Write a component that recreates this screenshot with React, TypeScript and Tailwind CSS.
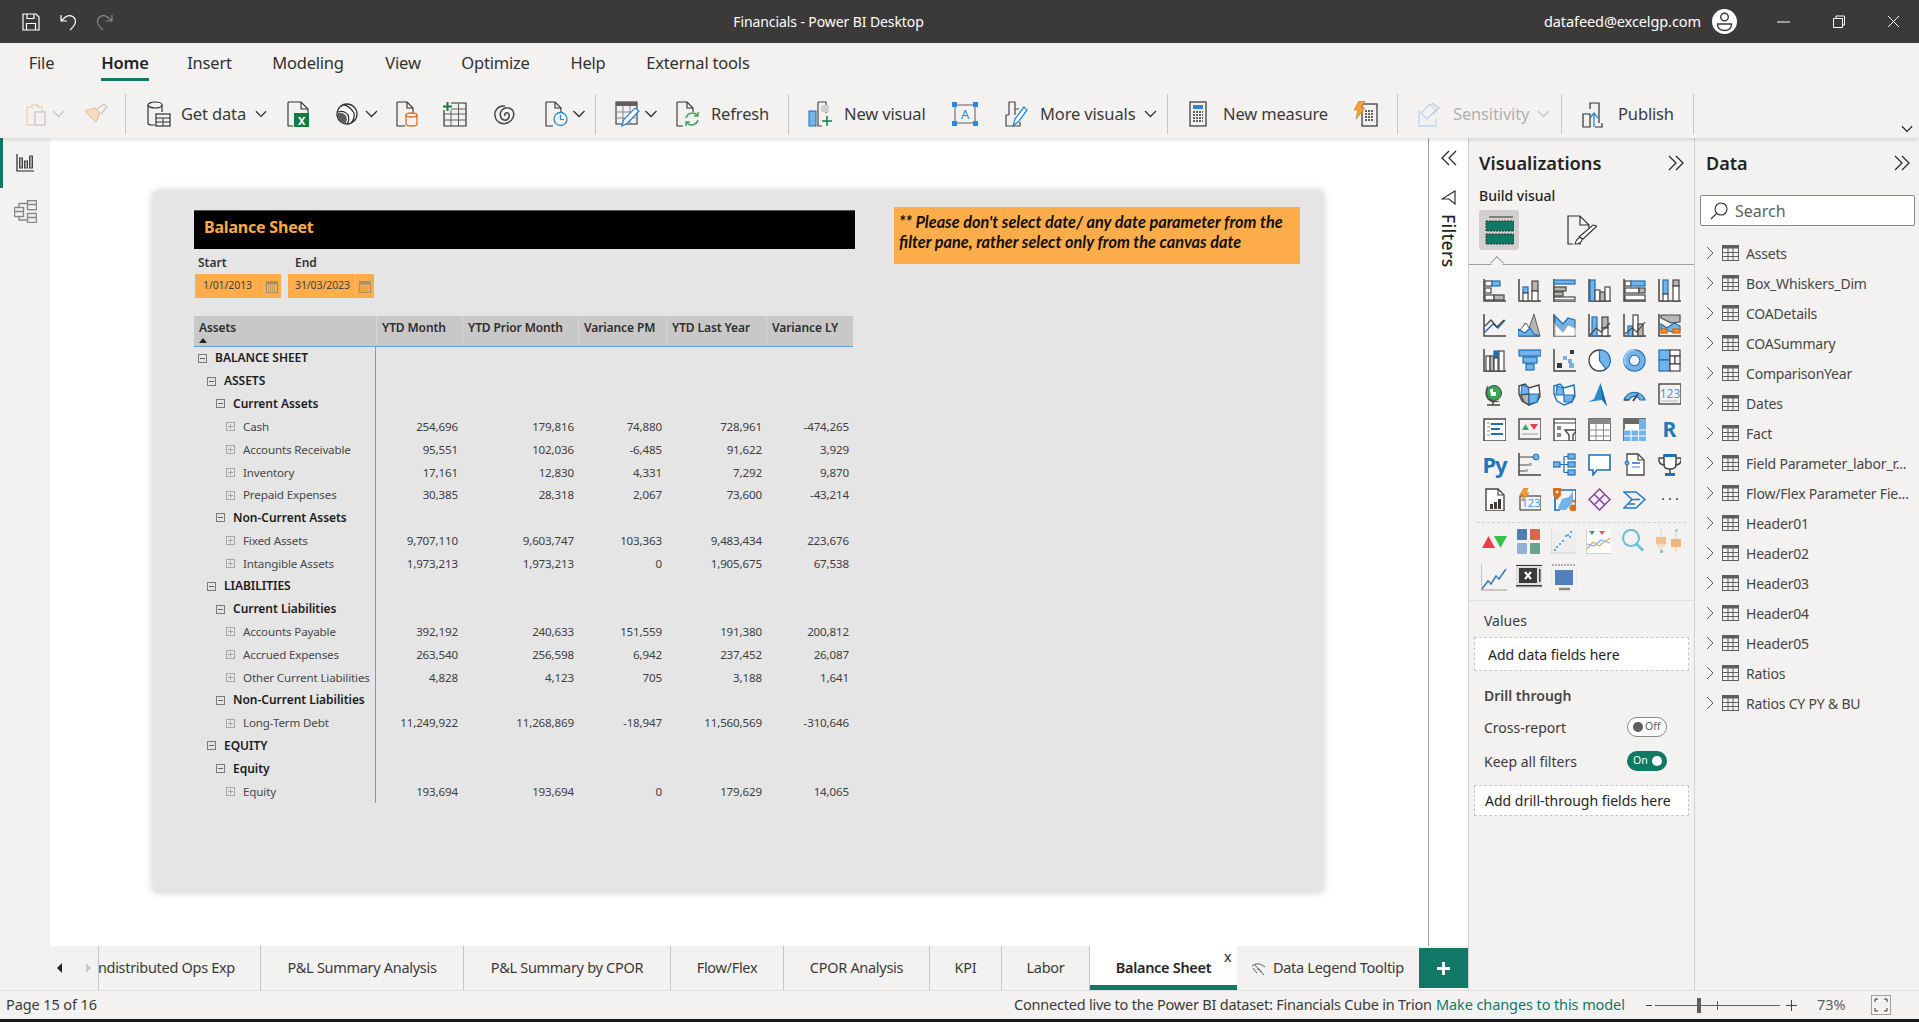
import React from "react";

const D = "#484644";
const B = "#1f6fb5";
const L = "#74b3ea";
const G = "#b8b6b4";
const W = "#ffffff";

const r = (x: number, y: number, w: number, h: number, f = W, s = D, sw = 1.2) => (
  <rect x={x} y={y} width={w} height={h} fill={f} stroke={s} strokeWidth={sw} />
);
const p = (d: string, f = "none", s = D, sw = 1.2) => <path d={d} fill={f} stroke={s} strokeWidth={sw} />;

function Ico({ children, size = 23, w, h, vb = "0 0 23 23" }: any) {
  return (
    <svg width={w ?? size} height={h ?? size} viewBox={vb} fill="none" className="shrink-0 block">
      {children}
    </svg>
  );
}

const Ax = p("M1 0v22h22", "none", D, 1.5);

const vizIcons: React.ReactNode[] = [
  <>{Ax}{r(2, 2, 7, 5)}{r(9, 2, 8, 5, L, B)}{r(2, 9, 6, 5)}{r(2, 16, 9, 5)}{r(11, 16, 10, 5, G, D)}</>,
  <>{Ax}{r(5, 8, 5, 6, L, B)}{r(5, 14, 5, 8)}{r(14, 2, 6, 10, G, D)}{r(14, 12, 6, 10)}</>,
  <>{p("M1 0v23h22", "none", D, 1.5)}{r(1, 1, 21, 4, L, B)}{r(1, 8, 12, 4, G, D)}{r(1, 13, 9, 4, G, D)}{r(1, 18, 21, 3)}</>,
  <>{Ax}{r(2, 1, 5, 21, L, B)}{r(7, 11, 5, 11)}{r(12, 13, 5, 9, G, D)}{r(17, 8, 5, 14)}</>,
  <>{Ax}{r(2, 2, 6, 5)}{r(8, 2, 14, 5, L, B)}{r(2, 9, 14, 5)}{r(16, 9, 6, 5, G, D)}{r(2, 16, 20, 5)}</>,
  <>{Ax}{r(5, 1, 5, 14, L, B)}{r(5, 15, 5, 7)}{r(15, 1, 6, 6, G, D)}{r(15, 7, 6, 15)}</>,
  <>{Ax}{p("M2 18L10 10L15 14L22 6", "none", B, 1.4)}{p("M2 12L8 6L14 13L21 6", "none", D, 1.2)}</>,
  <>{p("M0 22L7 9L11 14L16 0L22 22Z", G, D, 0.8)}{p("M1 22V17L8 9L15 20L22 22Z", W, D, 0.8)}{p("M0 22V15L7 19L12 14L16 20L22 22Z", L, B, 1.2)}</>,
  <>{Ax}{p("M2 2L10 10L15 4L22 6V14L15 11L10 18L2 10Z", L, B)}{p("M2 10L10 18L15 11L22 14V22H2Z", W, G)}</>,
  <>{Ax}{r(4, 3, 5, 19, L, B)}{r(14, 3, 6, 11, G, D)}{r(14, 14, 6, 8)}{p("M2 21L8 14L13 18L22 9", "none", D)}</>,
  <>{Ax}{r(5, 12, 5, 10, L, B)}{r(10, 1, 5, 21)}{r(15, 10, 5, 12, G, D)}{p("M2 20L9 14L14 18L22 8", "none", D)}</>,
  <>{Ax}{p("M3 1H22V8L13 9L3 4Z", G, D)}{p("M3 10L9 14L16 9L22 12V16L14 18L3 15Z", L, B)}{r(3, 15, 6, 4, "#e8912d", "#c86a10")}{r(15, 15, 7, 4, "#e8912d", "#c86a10")}</>,
  <>{Ax}{r(3, 7, 4, 15)}{r(7, 7, 4, 15, G, D)}{r(11, 2, 4, 7, B, B)}{r(11, 9, 4, 13)}{r(16, 2, 5, 20)}</>,
  <>{r(1, 1, 22, 6, L, B)}{r(5, 8, 14, 6, L, B)}{r(8, 15, 8, 6, L, B)}</>,
  <>{Ax}<rect x="17" y="1" width="4" height="4" fill="#3b3a39" /><rect x="10" y="7" width="4" height="4" fill={L} /><rect x="15" y="10" width="4" height="4" fill={L} /><rect x="4" y="14" width="5" height="5" fill="#3b3a39" /><rect x="16" y="14" width="5" height="5" fill={L} /></>,
  <><circle cx="11.5" cy="11.5" r="10.5" fill={W} stroke={D} strokeWidth="1.3" />{p("M11.5 1A10.5 10.5 0 0 1 18 20L11.5 11.5Z", L, B)}</>,
  <><circle cx="11.5" cy="11.5" r="8" stroke={B} strokeWidth="6.5" /><circle cx="11.5" cy="11.5" r="8" stroke={L} strokeWidth="4.5" /><path d="M11.5 1A10 10 0 0 0 3 16" stroke="#9cc9f0" strokeWidth="2" /></>,
  <>{r(1, 1, 11, 10, L, B)}{r(1, 11, 11, 11, L, B)}{r(12, 1, 10, 6)}{r(12, 7, 5, 8, W, D)}{r(17, 7, 5, 8)}{r(12, 15, 10, 7, W, D)}</>,
  <><circle cx="11" cy="10" r="7.5" fill="#3aa655" stroke={D} /><path d="M7 6h3v3h3v4H8z" fill={W} /><path d="M5 3Q1 10 5 16Q9 20 16 18" stroke={D} strokeWidth="1.3" /><path d="M4 22h13M10 18v4" stroke={D} strokeWidth="1.5" /></>,
  <>{p("M1 3L7 1L11 5L21 2L22 13L19 19L11 22L4 18L1 11Z", W, D, 1.4)}{p("M4 2L10 4L11 11L3 12Z", L, B)}{p("M11 11L3 12L6 19L11 22Z", G, D)}{p("M11 11H21L19 19L11 21Z", L, B)}</>,
  <>{p("M1 3L7 1L11 5L21 2L22 13L19 19L11 22L4 18L1 11Z", W, B, 1.4)}{p("M4 3L10 5L11 12L3 12Z", L, B)}{p("M11 12H21L19 19L11 19Z", L, B)}</>,
  <><path d="M12.5 0L6 16L0 19L14 17L19 23Z" fill="#2a8fc9" /><path d="M12.5 0L14 17L19 23Z" fill="#1b6ea8" /></>,
  <>{p("M1 17A11 11 0 0 1 22 17H17A6 6 0 0 0 6 17Z", L, B)}{p("M1 17H6", "none", D)}<path d="M10 18L15 11" stroke={D} strokeWidth="2" /></>,
  <>{r(1, 1, 22, 20, "#f3f2f1", D, 1.4)}<text x="12" y="15" textAnchor="middle" fontSize="12" fill="#4a9be0" fontFamily="Noto Sans">123</text><path d="M3 18h17" stroke={G} /></>,
  <>{r(1, 1, 22, 22, W, D, 1.5)}<path d="M4 5h3M4 9h3M4 13h3M4 17h3" stroke={G} strokeWidth="1.5" /><path d="M8 6h12M8 11h9M8 16h12" stroke={B} strokeWidth="2" /></>,
  <>{r(1, 1, 22, 20, "#f3f2f1", D, 1.4)}<path d="M4 12L7.5 6L11 12Z" fill="#43a35f" /><path d="M12 6H20L16 12Z" fill="#e2424c" /><path d="M4 16h16" stroke={G} strokeWidth="1.5" /></>,
  <>{r(1, 1, 22, 22, W, D, 1.4)}<path d="M1 5h22" stroke={D} /><rect x="4" y="8" width="4" height="4" fill="#8a8886" /><rect x="4" y="15" width="4" height="4" fill="#8a8886" />{p("M12 12H24L20 17V23H16V17Z", W, D, 1.4)}</>,
  <>{r(1, 1, 22, 22, W, D, 1.5)}<rect x="1" y="1" width="22" height="5" fill="#8a8886" /><path d="M1 12h22M1 18h22M8 6v17M15.5 6v17" stroke="#8a8886" /></>,
  <>{r(1, 1, 22, 22, W, D, 1.5)}<rect x="1" y="1" width="22" height="5" fill="#6b6967" /><rect x="16" y="1" width="7" height="22" fill={L} /><rect x="1" y="12" width="15" height="11" fill={L} /><path d="M1 12h22M1 18h22M8 6v17M15.5 6v17" stroke={W} /></>,
  <div className="flex h-[23px] w-[23px] items-center justify-center text-[21px] font-bold leading-none text-[#1f78b8]">R</div>,
  <div className="flex h-[23px] w-[23px] items-center justify-center text-[22px] font-bold leading-none tracking-[-1px] text-[#1f78b8]">Py</div>,
  <>{Ax}<path d="M1 4h15M1 12h11M1 18h6" stroke={D} /><circle cx="18" cy="4" r="3" fill={L} stroke={B} /><rect x="11" y="10" width="3" height="3" fill={G} /><rect x="7" y="16" width="3" height="3" fill={G} /></>,
  <>{r(0, 9, 7, 5, L, B)}{r(15, 1, 7, 5, L, B)}{r(15, 9, 7, 5, L, B)}{r(15, 17, 7, 5, L, B)}{p("M7 11.5H11M11 3.5V19.5M11 3.5H15M11 11.5H15M11 19.5H15", "none", B)}</>,
  <>{p("M1 2H22V17H9L5 22V17H1Z", W, B, 1.6)}</>,
  <>{p("M4 1H15L21 7V22H4Z", W, D, 1.3)}{p("M15 1V7H21", "none", D)}<circle cx="4" cy="10" r="2" fill={L} stroke={B} /><path d="M9 10h8" stroke={B} strokeWidth="1.5" /><path d="M9 14h8" stroke={L} strokeWidth="1.5" /></>,
  <>{p("M6 2H18V12Q18 16 12 16Q6 16 6 12Z", W, D, 1.5)}<rect x="6" y="1" width="12" height="3" fill={B} />{p("M6 5H1V8Q2 12 7 12M18 5H23V8Q22 12 17 12", "none", D, 1.4)}{p("M12 16V20", "none", D, 1.5)}<rect x="7" y="20" width="10" height="3" fill={B} /></>,
  <>{p("M3 1H15L21 7V23H3Z", W, D, 1.4)}{p("M15 1V7H21", "none", D)}<rect x="7" y="16" width="3" height="5" fill="#3b3a39" /><rect x="11" y="14" width="3" height="7" fill="#3b3a39" /><rect x="15" y="11" width="3" height="10" fill="#3b3a39" /></>,
  <>{r(2, 8, 21, 14, "#f3f2f1", D)}<text x="13" y="19" textAnchor="middle" fontSize="11" fill="#4a9be0" fontFamily="Noto Sans">123</text><path d="M6 0H10L8 5H11L4 13L5.5 7H2Z" fill="#f2a23a" stroke="#d07a10" strokeWidth="0.7" /></>,
  <>{p("M2 2H23V19", "none", B, 1.7)}{p("M7 22H2V8", "none", B, 1.7)}<path d="M5 20L9 11L16 9L20 3V14L13 22H7Z" fill={L} /><path d="M0 0H8V7L4 12L0 7Z" fill="#d9701f" /><circle cx="4" cy="4" r="1.3" fill={W} /><circle cx="20" cy="20" r="3.5" fill="#d9701f" /><circle cx="21" cy="13" r="1.6" fill="#d9701f" /></>,
  <><g stroke="#8f3fa0" strokeWidth="1.5" fill="none"><path d="M11.5 1L22 11.5L11.5 22L1 11.5Z" /><path d="M6.5 6.5L16.5 16.5M16.5 6.5L6.5 16.5" /></g></>,
  <><g stroke="#1f78d0" strokeWidth="1.5" fill="none"><path d="M1 4H13L22 11.5L13 20H1L9 11.5Z" /><path d="M9 11.5H17M5 16L12 16" /></g></>,
  <><circle cx="5" cy="11" r="1" fill={D} /><circle cx="12" cy="11" r="1" fill={D} /><circle cx="19" cy="11" r="1" fill={D} /></>,
];

const customIcons: React.ReactNode[] = [
  <Ico w={27} vb="0 0 27 23"><path d="M1 19L7.5 7L14 19Z" fill="#ea3f4f" /><path d="M13 7H26L19.5 19Z" fill="#3cc04d" /></Ico>,
  <Ico size={25} vb="0 0 25 25"><rect x="1" y="0" width="10" height="11" rx="1" fill="#4f7fb5" /><rect x="14" y="0" width="10" height="11" rx="1" fill="#d4694a" /><rect x="1" y="14" width="10" height="11" rx="1" fill="#92b2d6" /><rect x="14" y="14" width="10" height="11" rx="1" fill="#6aa38d" /></Ico>,
  <Ico size={25} vb="0 0 25 25"><rect x="1" y="1" width="24" height="24" fill="#ececec" opacity="0.7" /><path d="M0 24h25M0 0v24" stroke="#b8b6b4" strokeDasharray="1 1" /><g fill="#2f8fd8"><circle cx="4" cy="21" r="1" /><circle cx="6" cy="18" r="1" /><circle cx="9" cy="15" r="1" /><circle cx="12" cy="12" r="1" /><circle cx="15" cy="7" r="1" /><circle cx="17" cy="6" r="1" /><circle cx="19" cy="8" r="1" /><circle cx="20" cy="3" r="1" /></g></Ico>,
  <Ico size={25} vb="0 0 25 25"><rect width="25" height="25" fill="#fff" /><path d="M0 0v25h25" stroke="#a8a6a4" /><path d="M6 6L9 2H3Z" fill="#2fa37a" /><path d="M13 2h6l-3 4z" fill="#e8575f" /><path d="M1 20L7 13L13 17L24 9" stroke="#f0a46a" strokeWidth="1.3" /><path d="M1 15L8 17L15 11L24 14" stroke="#7ab4e0" strokeWidth="1.3" /></Ico>,
  <Ico size={23}><circle cx="10" cy="9" r="8" stroke="#6cc0d8" strokeWidth="2.2" /><path d="M15.5 15L22 21.5" stroke="#6cc0d8" strokeWidth="2.6" /></Ico>,
  <Ico size={25} vb="0 0 25 25"><g opacity="0.8"><rect x="0" y="8" width="10" height="7" fill="#efb27a" /><rect x="15" y="10" width="10" height="8" fill="#f0a862" /><rect x="1" y="15" width="8" height="3" fill="#f6d6b4" /><path d="M5 0v8M20 0v10M5 18v6M20 18v6" stroke="#cfd9cf" strokeWidth="1.5" /><rect x="4" y="21" width="3" height="3" fill="#7fc08d" /><rect x="19" y="0" width="3" height="3" fill="#a8d0b0" /></g></Ico>,
  <Ico w={26} h={27} vb="0 0 26 27"><path d="M0 0V26H26" stroke="#8a8886" strokeWidth="0.8" /><path d="M1 25L7 17L10 20L15 12L18 15L25 5" stroke="#3f7bc0" strokeWidth="1.5" /></Ico>,
  <Ico w={26} h={24} vb="0 0 26 24"><rect x="0" y="0" width="26" height="24" fill="#e1dfdd" /><rect x="0" y="1" width="26" height="1" fill="#3b3a39" /><rect x="3" y="4" width="18" height="15" fill="#3b3a39" /><path d="M9 8L15 15M15 8L9 15" stroke="#fff" strokeWidth="2" /><rect x="23" y="5" width="1.5" height="13" fill="#3b3a39" /><rect y="21" width="26" height="1.5" fill="#3b3a39" /></Ico>,
  <Ico w={26} h={27} vb="0 0 26 27"><path d="M1 1H25" stroke="#9a9896" strokeWidth="1.5" strokeDasharray="2 1" /><rect x="4" y="6" width="18" height="15" fill="#4f7fbc" /><path d="M8 25h11" stroke="#8a8886" strokeWidth="2.5" /><path d="M0 4v20M26 4v20" stroke="#e1dfdd" /></Ico>,
];

function Chev({ w = 13, color = "#323130" }: { w?: number; color?: string }) {
  return (
    <svg width={w} height="8" viewBox="0 0 13 8" fill="none" className="shrink-0">
      <path d="M1 1L6.5 6.5L12 1" stroke={color} strokeWidth="1.3" />
    </svg>
  );
}
const Sep = ({ ml }: { ml: string }) => <div className={`h-[40px] w-px shrink-0 bg-[#c8c6c4] ${ml}`} />;

const Double = ({ left, size = 16 }: { left?: boolean; size?: number }) => (
  <svg width={size} height={size} viewBox="0 0 16 16" fill="none" className="shrink-0">
    <path d={left ? "M8 1L1 8L8 15M15 1L8 8L15 15" : "M1 1L8 8L1 15M8 1L15 8L8 15"} stroke="#252423" strokeWidth="1.2" />
  </svg>
);

const navTabs: [string, string, string][] = [
  ["File", "ml-[29px]", "w-[25px]"],
  ["Home", "ml-[47px]", "w-[48px]"],
  ["Insert", "ml-[39px]", "w-[43px]"],
  ["Modeling", "ml-[40px]", "w-[74px]"],
  ["View", "ml-[39px]", "w-[38px]"],
  ["Optimize", "ml-[38px]", "w-[71px]"],
  ["Help", "ml-[39px]", "w-[36px]"],
  ["External tools", "ml-[40px]", "w-[104px]"],
];

type Row = { t: string; l: number; v?: string[] };
const rows: Row[] = [
  { t: "BALANCE SHEET", l: 0 },
  { t: "ASSETS", l: 1 },
  { t: "Current Assets", l: 2 },
  { t: "Cash", l: 3, v: ["254,696", "179,816", "74,880", "728,961", "-474,265"] },
  { t: "Accounts Receivable", l: 3, v: ["95,551", "102,036", "-6,485", "91,622", "3,929"] },
  { t: "Inventory", l: 3, v: ["17,161", "12,830", "4,331", "7,292", "9,870"] },
  { t: "Prepaid Expenses", l: 3, v: ["30,385", "28,318", "2,067", "73,600", "-43,214"] },
  { t: "Non-Current Assets", l: 2 },
  { t: "Fixed Assets", l: 3, v: ["9,707,110", "9,603,747", "103,363", "9,483,434", "223,676"] },
  { t: "Intangible Assets", l: 3, v: ["1,973,213", "1,973,213", "0", "1,905,675", "67,538"] },
  { t: "LIABILITIES", l: 1 },
  { t: "Current Liabilities", l: 2 },
  { t: "Accounts Payable", l: 3, v: ["392,192", "240,633", "151,559", "191,380", "200,812"] },
  { t: "Accrued Expenses", l: 3, v: ["263,540", "256,598", "6,942", "237,452", "26,087"] },
  { t: "Other Current Liabilities", l: 3, v: ["4,828", "4,123", "705", "3,188", "1,641"] },
  { t: "Non-Current Liabilities", l: 2 },
  { t: "Long-Term Debt", l: 3, v: ["11,249,922", "11,268,869", "-18,947", "11,560,569", "-310,646"] },
  { t: "EQUITY", l: 1 },
  { t: "Equity", l: 2 },
  { t: "Equity", l: 3, v: ["193,694", "193,694", "0", "179,629", "14,065"] },
];
const indentClass = ["pl-[4px]", "pl-[13px]", "pl-[22px]", "pl-[32px]"];
const colW = ["w-[86px]", "w-[116px]", "w-[88px]", "w-[100px]", "w-[87px]"];
const headers = ["YTD Month", "YTD Prior Month", "Variance PM", "YTD Last Year", "Variance LY"];

const Expander = ({ plus }: { plus?: boolean }) => (
  <svg width="9" height="9" viewBox="0 0 9 9" fill="none" className="shrink-0">
    <rect x="0.5" y="0.5" width="8" height="8" stroke={plus ? "#a8a8a8" : "#7a7a7a"} />
    <path d={plus ? "M2 4.5H7M4.5 2V7" : "M2 4.5H7"} stroke={plus ? "#a8a8a8" : "#666"} />
  </svg>
);

const Cal = () => (
  <svg width="12" height="13" viewBox="0 0 12 13" fill="none" className="shrink-0">
    <rect x="0.5" y="1.5" width="11" height="11" stroke="#a8906f" />
    <rect x="0.5" y="1.5" width="11" height="3" fill="#a8906f" />
    <path d="M2 7h8M2 9h8M2 11h8" stroke="#a8906f" strokeDasharray="1 1" />
  </svg>
);

const tables = ["Assets", "Box_Whiskers_Dim", "COADetails", "COASummary", "ComparisonYear", "Dates", "Fact", "Field Parameter_labor_r...", "Flow/Flex Parameter Fie...", "Header01", "Header02", "Header03", "Header04", "Header05", "Ratios", "Ratios CY PY & BU"];

const TableIco = () => (
  <svg width="17" height="16" viewBox="0 0 17 16" fill="none" className="shrink-0">
    <rect x="0.5" y="0.5" width="16" height="15" stroke="#605e5c" />
    <rect x="0.5" y="0.5" width="16" height="3" fill="#605e5c" />
    <path d="M1 7.5h15M1 11.5h15M6 3v12M11 3v12" stroke="#605e5c" />
  </svg>
);

const pageTabs: [string, string][] = [
  ["P&L Summary Analysis", "w-[203px]"],
  ["P&L Summary by CPOR", "w-[207px]"],
  ["Flow/Flex", "w-[113px]"],
  ["CPOR Analysis", "w-[146px]"],
  ["KPI", "w-[72px]"],
  ["Labor", "w-[88px]"],
];

const Dashed = "border border-dashed border-[#c8c6c4] bg-white";

export default function App() {
  return (
    <div className="flex h-screen w-full flex-col overflow-hidden bg-[#f3f2f1] font-['Noto_Sans',sans-serif] text-[#252423]">
      {/* Title bar */}
      <div className="relative flex h-[43px] shrink-0 items-center bg-[#3b3a39] text-white">
        <div className="ml-[22px]">
          <Ico size={18} vb="0 0 18 18"><path d="M1 1H14L17 4V17H1Z" stroke="#fff" strokeWidth="1.2" /><path d="M4.5 17V10.5H13.5V17M5 1V5.5H12V1" stroke="#fff" strokeWidth="1.2" /></Ico>
        </div>
        <div className="ml-[20px]">
          <Ico size={18} vb="0 0 18 18"><path d="M1 2V8H7M1.5 7.5L6 3.5Q12 1 15 6Q17 11 10 17" stroke="#fff" strokeWidth="1.2" /></Ico>
        </div>
        <div className="ml-[17px]">
          <Ico size={18} vb="0 0 18 18"><path d="M17 2V8H11M16.5 7.5L12 3.5Q6 1 3 6Q1 11 8 17" stroke="#8a8886" strokeWidth="1.2" /></Ico>
        </div>
        <div className="flex-1 text-center text-[14px] tracking-[-0.1px] text-white">Financials - Power BI Desktop</div>
        <div className="w-[154px] whitespace-nowrap text-[14.5px] tracking-[-0.1px]">datafeed@excelgp.com</div>
        <div className="ml-[14px]">
          <Ico size={25} vb="0 0 25 25"><circle cx="12.5" cy="12.5" r="12.5" fill="#fff" /><circle cx="12.5" cy="8" r="3.8" stroke="#3b3a39" strokeWidth="1.4" /><path d="M5.5 15H19.5C19.5 20 16 21.5 12.5 21.5C9 21.5 5.5 20 5.5 15Z" stroke="#3b3a39" strokeWidth="1.4" /></Ico>
        </div>
        <div className="ml-[40px]"><Ico size={13} vb="0 0 13 13"><path d="M0 7h13" stroke="#fff" strokeWidth="1" /></Ico></div>
        <div className="ml-[42px]"><Ico size={14} vb="0 0 14 14"><path d="M1.5 3.5H10.5V12.5H1.5ZM4 3.5V1H12.5V10H10.5" stroke="#fff" strokeWidth="1" /></Ico></div>
        <div className="ml-[41px] mr-[19px]"><Ico size={13} vb="0 0 13 13"><path d="M1 1L12 12M12 1L1 12" stroke="#fff" strokeWidth="1" /></Ico></div>
      </div>

      {/* Menu tabs */}
      <div className="flex h-[43px] shrink-0 items-stretch text-[16.5px] tracking-[-0.2px] text-[#323130]">
        {navTabs.map(([t, ml, w]) => (
          <div key={t} className={`relative flex items-center justify-center whitespace-nowrap pb-[3px] ${ml} ${w} ${t === "Home" ? "font-semibold text-[#252423]" : ""}`}>
            {t}
            {t === "Home" && <div className="absolute bottom-[5px] left-0 h-[3px] w-full bg-[#117865]" />}
          </div>
        ))}
      </div>

      {/* Ribbon */}
      <div className="relative z-10 flex h-[52px] shrink-0 items-center pt-[4px] text-[16.5px] tracking-[-0.15px] text-[#3b3a39] shadow-[0_2px_4px_rgba(0,0,0,0.12)]">
        <div className="ml-[24px]"><Ico size={23}><path d="M3 4H8V2H14V4H18V9" stroke="#ecd3b8" strokeWidth="1.3" /><path d="M3 4V22H10" stroke="#ecd3b8" strokeWidth="1.3" /><rect x="11" y="9" width="10" height="13" stroke="#c8c6c4" strokeWidth="1.3" /></Ico></div>
        <div className="ml-[5px]"><Chev color="#c8c6c4" /></div>
        <div className="ml-[19px]"><Ico w={25} h={23} vb="0 0 25 23"><path d="M1 8L12 19L16 10L11 5Z" fill="#f6dcc0" stroke="#e2b98e" /><path d="M13 6L20 1L23 4L17 11" stroke="#c8c6c4" strokeWidth="1.3" /></Ico></div>
        <Sep ml="ml-[16px]" />
        <div className="ml-[21px]"><Ico w={24} h={26} vb="0 0 24 26"><ellipse cx="8" cy="4" rx="7" ry="3" stroke="#323130" strokeWidth="1.2" /><path d="M1 4V22Q1 24 5 24H8M15 4V11" stroke="#323130" strokeWidth="1.2" /><rect x="9" y="13" width="14" height="12" stroke="#323130" strokeWidth="1.2" /><path d="M9 17h14M9 21h14M16 17v8" stroke="#323130" /></Ico></div>
        <div className="ml-[10px] w-[66px] whitespace-nowrap">Get data</div>
        <div className="ml-[8px]"><Chev w={12} /></div>
        <div className="ml-[20px]"><Ico w={22} h={26} vb="0 0 22 26"><path d="M1 1H14L21 8V13M1 1V25H6" stroke="#323130" strokeWidth="1.1" /><path d="M14 1V8H21" stroke="#323130" strokeWidth="1.1" /><rect x="7" y="12" width="15" height="14" fill="#107c41" /><text x="14.5" y="23.5" textAnchor="middle" fontSize="11" fontWeight="700" fill="#fff" fontFamily="Noto Sans">X</text></Ico></div>
        <div className="ml-[27px]"><Ico w={22} h={24} vb="0 0 22 24"><circle cx="11" cy="12" r="10" fill="#fff" stroke="#323130" strokeWidth="1.3" /><path d="M7 2.5Q14 4 18 11Q19 17 15 21M2 10Q8 8 12 13Q14 18 11 22" stroke="#323130" strokeWidth="1.3" /><path d="M2 11Q7 10 10 14Q12 18 9 22Q3 20 2 15Z" fill="#605e5c" /></Ico></div>
        <div className="ml-[7px]"><Chev /></div>
        <div className="ml-[18px]"><Ico w={22} h={26} vb="0 0 22 26"><path d="M1 1H11L17 7V12M1 1V25H9" stroke="#323130" strokeWidth="1.1" /><path d="M11 1V7H17" stroke="#323130" strokeWidth="1.1" /><ellipse cx="15.5" cy="14" rx="5.5" ry="2" stroke="#d9701f" strokeWidth="1.3" /><path d="M10 14V23Q10 25 15.5 25Q21 25 21 23V14" stroke="#d9701f" strokeWidth="1.3" /></Ico></div>
        <div className="ml-[25px]"><Ico w={24} h={26} vb="0 0 24 26"><path d="M8 2H23V25H1V9" stroke="#323130" strokeWidth="1.2" /><path d="M1 13h22M1 19h22M8 9v16M15.5 2v23M8 8H23" stroke="#605e5c" /><path d="M0 5.5H9M4.5 1V10" stroke="#107c41" strokeWidth="2" /></Ico></div>
        <div className="ml-[26px]"><Ico size={23}><path d="M12 3C5 2 1 8 2 13C3 19 9 22 14 20C20 18 22 12 20 8C18 4 12 4 9 7C6 10 7 16 11 17C15 18 18 13 15 10C13 9 11 11 12 13" stroke="#484644" strokeWidth="1.5" /></Ico></div>
        <div className="ml-[29px]"><Ico w={23} h={26} vb="0 0 23 26"><path d="M1 1H10L16 7V12M1 1V25H8" stroke="#323130" strokeWidth="1.1" /><path d="M10 1V7H16" stroke="#323130" strokeWidth="1.1" /><circle cx="15.5" cy="18" r="6.5" stroke="#2b88d8" strokeWidth="1.3" /><path d="M15.5 14V18.5H19" stroke="#2b88d8" strokeWidth="1.2" /></Ico></div>
        <div className="ml-[4px]"><Chev w={14} /></div>
        <Sep ml="ml-[9px]" />
        <div className="ml-[19px]"><Ico w={25} h={26} vb="0 0 25 26"><rect x="1" y="1" width="21" height="22" stroke="#484644" strokeWidth="1.2" /><rect x="1" y="1" width="21" height="4" fill="#605e5c" /><path d="M1 11h21M1 17h21M8 5v18M15 5v18" stroke="#8a8886" /><path d="M7 25L8.5 19L20 7L24 10L12.5 22Z" fill="#fff" stroke="#2b88d8" strokeWidth="1.3" /></Ico></div>
        <div className="ml-[4px]"><Chev w={14} /></div>
        <div className="ml-[18px]"><Ico w={24} h={26} vb="0 0 24 26"><path d="M1 1H11L17 7V11M1 1V25H7" stroke="#323130" strokeWidth="1.1" /><path d="M11 1V7H17" stroke="#323130" strokeWidth="1.1" /><path d="M10 17A6.5 6.5 0 0 1 21 14M22 11V15H18M22 19A6.5 6.5 0 0 1 11 22M10 25V21H14" stroke="#43a35f" strokeWidth="1.5" /></Ico></div>
        <div className="ml-[11px] w-[57px] whitespace-nowrap">Refresh</div>
        <Sep ml="ml-[20px]" />
        <div className="ml-[19px]"><Ico w={25} h={26} vb="0 0 25 26"><path d="M10 1H18V12M10 1V14" stroke="#484644" strokeWidth="1.2" /><rect x="13" y="4" width="8" height="7" fill="#d2d0ce" /><rect x="1" y="10" width="7" height="15" fill="#74b3ea" stroke="#1f6fb5" /><path d="M10 14V25H14" stroke="#484644" strokeWidth="1.2" /><path d="M14 20H24M19 15V25" stroke="#107c41" strokeWidth="1.5" /></Ico></div>
        <div className="ml-[11px] w-[83px] whitespace-nowrap">New visual</div>
        <div className="ml-[25px]"><Ico w={26} h={24} vb="0 0 26 24"><rect x="3" y="3" width="20" height="18" stroke="#605e5c" /><rect x="0" y="0" width="5" height="5" fill="#2b88d8" /><rect x="21" y="0" width="5" height="5" fill="#2b88d8" /><rect x="0" y="19" width="5" height="5" fill="#2b88d8" /><rect x="21" y="19" width="5" height="5" fill="#2b88d8" /><text x="13" y="17" textAnchor="middle" fontSize="13" fill="#2b88d8" fontFamily="Noto Sans">A</text></Ico></div>
        <div className="ml-[27px]"><Ico w={23} h={26} vb="0 0 23 26"><path d="M4 14H1V25H15V21M4 14V1H10V14M10 8L14 8" stroke="#484644" strokeWidth="1.2" /><path d="M8 25L10 18L19 6L22 9L14 20Z" fill="#fff" stroke="#2b88d8" strokeWidth="1.3" /></Ico></div>
        <div className="ml-[12px] w-[97px] whitespace-nowrap">More visuals</div>
        <div className="ml-[7px]"><Chev /></div>
        <Sep ml="ml-[10px]" />
        <div className="ml-[21px]"><Ico w={18} h={26} vb="0 0 18 26"><rect x="1" y="1" width="16" height="24" stroke="#323130" strokeWidth="1.2" /><rect x="4" y="4" width="10" height="4" fill="#2b88d8" /><path d="M4 11h10M4 14h10M4 17h10M4 20h10" stroke="#323130" strokeWidth="1.5" strokeDasharray="2 1" /></Ico></div>
        <div className="ml-[16px] w-[105px] whitespace-nowrap">New measure</div>
        <div className="ml-[26px]"><Ico w={24} h={26} vb="0 0 24 26"><rect x="8" y="3" width="15" height="22" stroke="#323130" strokeWidth="1.2" /><path d="M11 10h9M11 13h9M11 16h9M11 19h9" stroke="#323130" strokeWidth="1.5" strokeDasharray="2 1" /><path d="M5 0H11L7 7H11L2 18L4 9H0Z" fill="#f2a23a" stroke="#d07a10" strokeWidth="0.7" /></Ico></div>
        <Sep ml="ml-[19px]" />
        <div className="ml-[20px]"><Ico w={22} h={25} vb="0 0 22 25"><path d="M1 8V24H18V17" stroke="#bcd8ef" strokeWidth="1.3" /><path d="M3 11L12 2L18 8L9 17Z" stroke="#bcd8ef" strokeWidth="1.3" /><path d="M14 1L21 6L15 12" stroke="#c8c6c4" strokeWidth="1.2" /></Ico></div>
        <div className="ml-[13px] w-[78px] whitespace-nowrap text-[#b3b0ad]">Sensitivity</div>
        <div className="ml-[6px]"><Chev color="#c8c6c4" /></div>
        <Sep ml="ml-[11px]" />
        <div className="ml-[20px]"><Ico w={21} h={27} vb="0 0 21 27"><path d="M8 8V2H17V22" stroke="#323130" strokeWidth="1.2" /><path d="M1 13H8V26H1ZM13 26H20V22" stroke="#323130" strokeWidth="1.2" /><path d="M12 26V13M8 17L12 12L16 17" stroke="#2b88d8" strokeWidth="1.3" /></Ico></div>
        <div className="ml-[15px] w-[55px] whitespace-nowrap">Publish</div>
        <Sep ml="ml-[20px]" />
        <div className="ml-[207px] mt-[30px]"><Chev w={12} color="#252423" /></div>
      </div>

      {/* Main */}
      <div className="flex min-h-0 flex-1">
        <div className="flex w-[1468px] shrink-0 flex-col">
          <div className="flex h-[808px] shrink-0">
            {/* Left nav */}
            <div className="flex w-[50px] shrink-0 flex-col">
              <div className="flex h-[50px] items-center border-l-[3px] border-[#117865] pl-[13px]">
                <Ico w={18} h={18} vb="0 0 18 18"><path d="M1 0V17H18" stroke="#252423" strokeWidth="1.2" /><rect x="3.5" y="4" width="3" height="10" fill="#a19f9d" stroke="#484644" /><rect x="8.5" y="7" width="3" height="7" fill="#a19f9d" stroke="#484644" /><rect x="13.5" y="2" width="3" height="12" fill="#a19f9d" stroke="#484644" /></Ico>
              </div>
              <div className="ml-[14px] mt-[12px]">
                <Ico size={23}><g stroke="#8a8886" strokeWidth="1.4"><rect x="0.5" y="7.5" width="9" height="9" /><rect x="13.5" y="0.7" width="9" height="9" /><rect x="13.5" y="13.5" width="9" height="9" /><path d="M0.5 11.5h9M13.5 4.5h9M13.5 17.5h9M5 7.5V3.5H13.5M5 16.5V20H13.5" /></g></Ico>
              </div>
            </div>
            {/* Canvas */}
            <div className="flex-1 bg-white pl-[103px] pt-[53px]">
              <div className="flex h-[701px] w-[1170px] rounded-[4px] bg-[#e5e5e5] pl-[41px] pt-[16px] shadow-[0_0_8px_rgba(0,0,0,0.22)]">
                <div className="w-[661px] pt-[3px]">
                  <div className="flex h-[39px] items-center border-t border-[#555] bg-black pb-[6px] pl-[10px] text-[16px] font-bold tracking-[-0.2px] text-[#ffab45]">Balance Sheet</div>
                  <div className="flex pt-[5px] text-[12px] font-semibold text-[#333]">
                    <div className="w-[97px] pl-[4px]">Start</div>
                    <div className="pl-[4px]">End</div>
                  </div>
                  <div className="mt-[2px] flex gap-[7px] pl-[1px] text-[10.5px] tracking-[-0.1px] text-[#444]">
                    <div className="flex h-[24px] w-[86px] items-center justify-between bg-[#ffac4b] pl-[8px] pr-[3px]">1/01/2013<Cal /></div>
                    <div className="flex h-[24px] w-[86px] items-center bg-[#ffac4b] pl-[7px]">
                      <span className="w-[60px]">31/03/2023</span>
                      <span className="flex h-full flex-1 items-center justify-center border-l border-[#f5c48a]"><Cal /></span>
                    </div>
                  </div>
                  {/* Matrix */}
                  <div className="mt-[18px] w-[659px] text-[#333]">
                    <div className="flex h-[31px] items-start border-b border-[#5ba3e6] bg-[#c8c8c8] text-[12px] font-semibold tracking-[-0.1px] text-[#2e2e2e]">
                      <div className="relative h-full w-[182px] pl-[5px] pt-[3px]">
                        Assets
                        <div className="absolute bottom-[3px] left-[5px] h-0 w-0 border-x-[4px] border-b-[5px] border-x-transparent border-b-[#252423]" />
                      </div>
                      {headers.map((h, i) => (
                        <div key={h} className={`h-full whitespace-nowrap border-l border-[#d6d6d6] pl-[5px] pt-[3px] ${colW[i]}`}>{h}</div>
                      ))}
                    </div>
                    {rows.map((row, i) => (
                      <div key={i} className="flex h-[22.8px] items-center text-[11.6px] tracking-[-0.15px]">
                        <div className={`flex h-full w-[182px] items-center border-r border-[#5ba3e6] whitespace-nowrap ${indentClass[row.l]}`}>
                          <Expander plus={row.l === 3} />
                          <span className={`ml-[8px] ${row.l < 3 ? "text-[12px] font-semibold tracking-[-0.03px] text-[#1c1c1c]" : "text-[#484848]"}`}>{row.t}</span>
                        </div>
                        {row.v?.map((v, j) => (
                          <div key={j} className={`pr-[4px] text-right text-[#404040] ${colW[j]}`}>{v}</div>
                        ))}
                      </div>
                    ))}
                  </div>
                </div>
                <div className="ml-[39px] h-[57px] w-[406px] bg-[#ffac4b] pl-[5px] pt-[5px] font-['Lato',sans-serif] text-[16.3px] font-bold italic leading-[20px] text-[#111] whitespace-nowrap">
                  ** Please don't select date/ any date parameter from the<br />filter pane, rather select only from the canvas date
                </div>
              </div>
            </div>
            {/* Filters */}
            <div className="flex w-[40px] shrink-0 flex-col items-center border-l border-[#a19f9d] bg-white pt-[12px]">
              <Double left />
              <div className="mt-[24px]"><Ico w={15} h={15} vb="0 0 15 15"><path d="M14 1V14L8 9H1L14 1Z" stroke="#323130" strokeWidth="1.2" /></Ico></div>
              <div className="mt-[9px] text-[17.5px] font-medium tracking-[0.3px] [writing-mode:vertical-rl]">Filters</div>
            </div>
          </div>
          {/* Page tabs */}
          <div className="flex h-[44px] shrink-0 items-stretch border-b-0 text-[14.5px] tracking-[-0.3px] text-[#3b3a39]">
            <div className="flex w-[99px] shrink-0 items-center border-r border-[#c8c6c4] pl-[57px]">
              <div className="h-0 w-0 border-y-[5px] border-r-[5px] border-y-transparent border-r-[#252423]" />
              <div className="ml-[24px] h-0 w-0 border-y-[5px] border-l-[5px] border-y-transparent border-l-[#c8c6c4]" />
            </div>
            <div className="flex w-[162px] shrink-0 items-center justify-end overflow-hidden border-r border-[#c8c6c4] pr-[25px]">
              <span className="shrink-0 whitespace-nowrap">Undistributed Ops Exp</span>
            </div>
            {pageTabs.map(([t, w]) => (
              <div key={t} className={`flex shrink-0 items-center justify-center whitespace-nowrap border-r border-[#c8c6c4] ${w}`}>{t}</div>
            ))}
            <div className="relative flex w-[147px] shrink-0 items-center justify-center whitespace-nowrap border-b-[5px] border-[#117865] bg-white pt-[5px] font-semibold text-[#252423]">
              Balance Sheet
              <span className="absolute right-[6px] top-[4px] text-[14px] font-normal leading-none">x</span>
            </div>
            <div className="flex w-[182px] shrink-0 items-center whitespace-nowrap pl-[14px]">
              <Ico size={17} vb="0 0 17 17"><path d="M1 6Q7 1 14 7M3 4L13 15M6 9Q9 8 10 12M2 8L6 13" stroke="#605e5c" strokeWidth="1" /></Ico>
              <span className="ml-[5px]">Data Legend Tooltip</span>
            </div>
            <div className="my-[2px] flex w-[49px] shrink-0 items-center justify-center bg-[#117865]">
              <Ico size={15} vb="0 0 15 15"><path d="M7.5 1V14M1 7.5H14" stroke="#fff" strokeWidth="3" /></Ico>
            </div>
          </div>
        </div>

        {/* Visualizations */}
        <div className="flex w-[227px] shrink-0 flex-col border-x border-[#d2d0ce] bg-[#f3f2f1]">
          <div className="flex h-[48px] shrink-0 items-center justify-between pl-[10px] pr-[10px] pt-[2px] text-[18.3px] font-semibold">
            Visualizations <Double />
          </div>
          <div className="flex h-[20px] shrink-0 items-center pb-[2px] pl-[10px] text-[14px] font-medium">Build visual</div>
          <div className="mt-[4px] flex shrink-0 pl-[10px]">
            <div className="flex h-[40px] w-[40px] items-center justify-center rounded-[3px] bg-[#d2d0ce]">
              <Ico w={30} h={30} vb="0 0 30 30"><path d="M5 2H29" stroke="#323130" /><rect x="2" y="6" width="28" height="10" fill="#117865" stroke="#323130" strokeDasharray="2 1" /><rect x="2" y="19" width="28" height="10" fill="#117865" stroke="#323130" strokeDasharray="2 1" /></Ico>
            </div>
            <div className="ml-[48px] mt-[5px]">
              <Ico w={30} h={30} vb="0 0 30 30"><path d="M6 29H1V1H13L22 10V13M13 1V10H22M12 29H14" stroke="#323130" strokeWidth="1.2" /><path d="M30 11L16 24L12 22L26 10Z" fill="#fff" stroke="#323130" strokeWidth="1.1" /><path d="M15 24C13 21 9 24 8 29C12 29 15 28 15 24Z" fill="#fff" stroke="#323130" strokeWidth="1.1" /></Ico>
            </div>
          </div>
          <div className="relative h-[15px] shrink-0 border-b border-[#a19f9d]">
            <div className="absolute bottom-[-4px] left-[23px] h-[10px] w-[10px] rotate-45 border-l border-t border-[#a19f9d] bg-[#f3f2f1]" />
          </div>
          <div className="grid h-[257px] shrink-0 grid-cols-[repeat(6,35px)] content-start pl-[14px] pt-[14px]">
            {vizIcons.map((ic, i) => (
              <div key={i} className="flex h-[34.8px] items-start">
                {React.isValidElement(ic) && ic.type === "div" ? ic : <Ico>{ic}</Ico>}
              </div>
            ))}
          </div>
          <div className="mx-[8px] shrink-0 border-t border-dashed border-[#d2d0ce]" />
          <div className="grid h-[77px] shrink-0 grid-cols-[repeat(6,35px)] content-start pl-[12px] pt-[6px]">
            {customIcons.map((ic, i) => (
              <div key={i} className="flex h-[35px] items-start">{ic}</div>
            ))}
          </div>
          <div className="shrink-0 border-t border-[#e1dfdd]" />
          <div className="mt-[9px] flex h-[20px] shrink-0 items-center pl-[15px] text-[14px] text-[#3b3a39]">Values</div>
          <div className={`mx-[5px] mt-[7px] flex h-[34px] shrink-0 items-center pl-[13px] text-[14px] ${Dashed}`}>Add data fields here</div>
          <div className="mt-[14px] flex h-[20px] shrink-0 items-center pl-[15px] text-[14px] font-semibold text-[#484644]">Drill through</div>
          <div className="mt-[12px] flex h-[20px] shrink-0 items-center justify-between pl-[15px] pr-[27px] text-[14px] text-[#3b3a39]">
            Cross-report
            <div className="flex h-[20px] w-[40px] items-center rounded-full border border-[#8a8886] bg-white pl-[5px] text-[10.5px] text-[#605e5c]">
              <span className="mr-[2px] h-[10px] w-[10px] rounded-full bg-[#605e5c]" />Off
            </div>
          </div>
          <div className="mt-[14px] flex h-[20px] shrink-0 items-center justify-between pl-[15px] pr-[27px] text-[14px] text-[#3b3a39]">
            Keep all filters
            <div className="flex h-[20px] w-[40px] items-center justify-between rounded-full bg-[#117865] pl-[6px] pr-[5px] text-[10.5px] text-white">
              On<span className="h-[10px] w-[10px] rounded-full bg-white" />
            </div>
          </div>
          <div className={`mx-[5px] mt-[14px] flex h-[31px] shrink-0 items-center pl-[10px] text-[14px] whitespace-nowrap ${Dashed}`}>Add drill-through fields here</div>
        </div>

        {/* Data */}
        <div className="flex min-w-0 flex-1 flex-col bg-[#f3f2f1]">
          <div className="flex h-[48px] shrink-0 items-center justify-between pl-[11px] pr-[9px] pt-[2px] text-[18px] font-semibold">
            Data <Double />
          </div>
          <div className="ml-[5px] mt-[9px] flex h-[31px] w-[215px] shrink-0 items-center rounded-[2px] border border-[#8a8886] bg-white pl-[9px] text-[16px] text-[#605e5c]">
            <Ico size={18} vb="0 0 18 18"><circle cx="11" cy="7" r="6" stroke="#323130" strokeWidth="1.1" /><path d="M6.5 11.5L1 17" stroke="#323130" strokeWidth="1.1" /></Ico>
            <span className="ml-[7px]">Search</span>
          </div>
          <div className="mt-[12px] flex flex-col">
            {tables.map((t) => (
              <div key={t} className="flex h-[30px] items-center pl-[11px] text-[14px] tracking-[-0.2px] whitespace-nowrap text-[#484644]">
                <svg width="8" height="14" viewBox="0 0 8 14" fill="none" className="shrink-0"><path d="M1 1L7 7L1 13" stroke="#605e5c" strokeWidth="1" /></svg>
                <span className="ml-[8px]"><TableIco /></span>
                <span className="ml-[7px]">{t}</span>
              </div>
            ))}
          </div>
        </div>
      </div>

      {/* Status bar */}
      <div className="flex h-[29px] shrink-0 items-center border-t border-[#e1dfdd] text-[14.5px] tracking-[-0.1px] text-[#3b3a39]">
        <span className="ml-[6px] w-[92px] whitespace-nowrap">Page 15 of 16</span>
        <span className="ml-[916px] w-[422px] whitespace-nowrap tracking-[-0.22px]">Connected live to the Power BI dataset: Financials Cube in Trion</span>
        <span className="w-[187px] whitespace-nowrap text-[#117865]">Make changes to this model</span>
        <span className="ml-[23px] h-[1px] w-[6px] bg-[#484644]" />
        <div className="relative ml-[3px] h-[1px] w-[125px] bg-[#605e5c]">
          <div className="absolute left-[42px] top-[-7px] h-[15px] w-[4px] bg-[#605e5c]" />
          <div className="absolute left-[62px] top-[-4px] h-[9px] w-px bg-[#605e5c]" />
        </div>
        <span className="ml-[6px]"><Ico size={11} vb="0 0 11 11"><path d="M5.5 0V11M0 5.5H11" stroke="#484644" /></Ico></span>
        <span className="ml-[20px] w-[29px] whitespace-nowrap text-[#605e5c]">73%</span>
        <span className="ml-[25px]"><Ico size={20} vb="0 0 20 20"><rect x="0.5" y="0.5" width="19" height="19" stroke="#a19f9d" /><path d="M4 7V4H7M13 4H16V7M16 13V16H13M7 16H4V13" stroke="#323130" /></Ico></span>
      </div>
      <div className="h-[3px] shrink-0 bg-[#1a1a1a]" />
    </div>
  );
}
